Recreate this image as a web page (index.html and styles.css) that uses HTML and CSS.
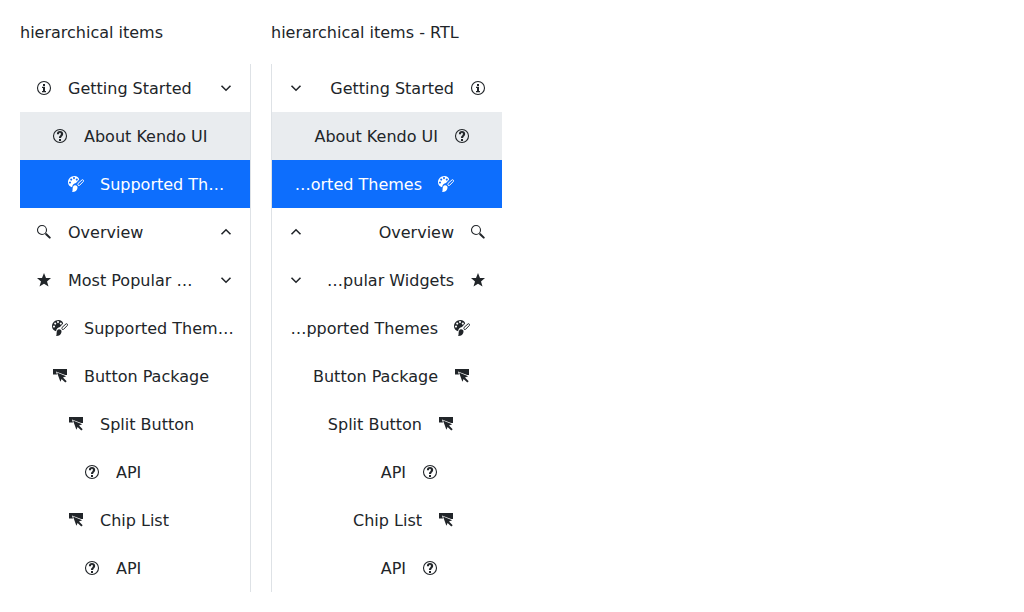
FILE: index.html
```
<!DOCTYPE html>
<html lang="en">
<head>
<meta charset="utf-8">
<title>Drawer hierarchical items</title>
<link rel="stylesheet" href="styles.css">
</head>
<body>
<svg class="sprite" aria-hidden="true">
  <symbol id="info" viewBox="0 0 16 16"><circle cx="8" cy="8" r="6.500" fill="none" stroke="currentColor" stroke-width="1.100"/><path d="M7 4h2v2H7zM6 6.800h3V11h1v1.200H6V11h1V8H6z"/></symbol>
  <symbol id="question" viewBox="0 0 16 16"><circle cx="8" cy="8" r="6.500" fill="none" stroke="currentColor" stroke-width="1.100"/><path d="M7 11h2v2H7zM4.900 6.300C4.900 4 6 3 8 3s3.200 1.100 3.200 2.900C11.200 8 9.100 8.300 9.100 10H6.900c0-2.500 2-2.700 2-4.100 0-.7-.3-1.100-.9-1.100s-1 .5-1 1.500z"/></symbol>
  <symbol id="search" viewBox="0 0 16 16"><circle cx="6" cy="6" r="4.500" fill="none" stroke="currentColor" stroke-width="1.100"/><path d="M9 10l1-1 1 .5 3.700 3.700c.5.5-.9 1.900-1.400 1.400L9.500 11z"/></symbol>
  <symbol id="star" viewBox="0 0 16 16"><path d="M8 1l2 5h5l-4 3.400 1.500 5.200L8 11.700l-4.500 2.900L5 9.400 1 6h5z"/></symbol>
  <symbol id="palette" viewBox="0 0 16 16"><path fill-rule="evenodd" d="M6.500 0c2.300 0 4.300 1.300 4.700 3.500L8 7.100C6 7.500 4.400 8.700 4.100 11.200 1.600 10.700 0 8.800 0 6.200 0 2.800 3 0 6.500 0zM6 1a1 1 0 1 0 .01 0zM8.800 2.500a1 1 0 1 0 .01 0zM3.200 2.500a1 1 0 1 0 .01 0zM2 5.500a1 1 0 1 0 .01 0z"/><path d="M9.900 8.500l.2-1.100L14 3.900c.9-.7 2.100.6 1.400 1.500l-3.900 4-1.100.1z" fill="none" stroke="currentColor" stroke-width="1"/><path d="M7 9.200c1.800 0 2.700 1.100 2.500 2.700-.3 2.300-2 4.100-5.500 4.100.9-.9.400-2.200.7-3.900.3-1.900 1-2.900 2.300-2.900z"/></symbol>
  <symbol id="button" viewBox="0 0 16 16"><path d="M1 1h14v6h-1.800L3.900 3.600 5 6.500H1z"/><path d="M5 4.500l9.200 3.700-3.200 1.300 3.700 3.700-1.400 1.400-3.700-3.700-1.200 2.900z"/></symbol>
  <symbol id="down" viewBox="0 0 16 16"><path d="M3.500 5.800L8 10.200l4.500-4.400" fill="none" stroke="currentColor" stroke-width="1.600"/></symbol>
  <symbol id="up" viewBox="0 0 16 16"><path d="M3.500 10.200L8 5.800l4.500 4.400" fill="none" stroke="currentColor" stroke-width="1.600"/></symbol>
</svg>
<main class="board">
  <section>
    <h1 class="title">hierarchical items</h1>
    <ul class="drawer">
      <li class="item"><svg class="icon"><use href="#info"/></svg><span class="text">Getting Started</span><svg class="icon"><use href="#down"/></svg></li>
      <li class="item level-1 hover"><svg class="icon"><use href="#question"/></svg><span class="text">About Kendo UI</span></li>
      <li class="item level-2 selected"><svg class="icon"><use href="#palette"/></svg><span class="text">Supported Themes</span></li>
      <li class="item"><svg class="icon"><use href="#search"/></svg><span class="text">Overview</span><svg class="icon"><use href="#up"/></svg></li>
      <li class="item"><svg class="icon"><use href="#star"/></svg><span class="text">Most Popular Widgets</span><svg class="icon"><use href="#down"/></svg></li>
      <li class="item level-1"><svg class="icon"><use href="#palette"/></svg><span class="text">Supported Themes</span></li>
      <li class="item level-1"><svg class="icon"><use href="#button"/></svg><span class="text">Button Package</span></li>
      <li class="item level-2"><svg class="icon"><use href="#button"/></svg><span class="text">Split Button</span></li>
      <li class="item level-3"><svg class="icon"><use href="#question"/></svg><span class="text">API</span></li>
      <li class="item level-2"><svg class="icon"><use href="#button"/></svg><span class="text">Chip List</span></li>
      <li class="item level-3"><svg class="icon"><use href="#question"/></svg><span class="text">API</span></li>
    </ul>
  </section>
  <section>
    <h1 class="title">hierarchical items - RTL</h1>
    <ul class="drawer" dir="rtl">
      <li class="item"><svg class="icon"><use href="#info"/></svg><span class="text">Getting Started</span><svg class="icon"><use href="#down"/></svg></li>
      <li class="item level-1 hover"><svg class="icon"><use href="#question"/></svg><span class="text">About Kendo UI</span></li>
      <li class="item level-2 selected"><svg class="icon"><use href="#palette"/></svg><span class="text">Supported Themes</span></li>
      <li class="item"><svg class="icon"><use href="#search"/></svg><span class="text">Overview</span><svg class="icon"><use href="#up"/></svg></li>
      <li class="item"><svg class="icon"><use href="#star"/></svg><span class="text">Most Popular Widgets</span><svg class="icon"><use href="#down"/></svg></li>
      <li class="item level-1"><svg class="icon"><use href="#palette"/></svg><span class="text">Supported Themes</span></li>
      <li class="item level-1"><svg class="icon"><use href="#button"/></svg><span class="text">Button Package</span></li>
      <li class="item level-2"><svg class="icon"><use href="#button"/></svg><span class="text">Split Button</span></li>
      <li class="item level-3"><svg class="icon"><use href="#question"/></svg><span class="text">API</span></li>
      <li class="item level-2"><svg class="icon"><use href="#button"/></svg><span class="text">Chip List</span></li>
      <li class="item level-3"><svg class="icon"><use href="#question"/></svg><span class="text">API</span></li>
    </ul>
  </section>
</main>
</body>
</html>
```

FILE: styles.css
```
* { box-sizing: border-box; }
body {
  margin: 0;
  background: #fff;
  color: #212529;
  font: 16px/24px "DejaVu Sans", sans-serif;
}
.sprite { display: none; }
.board {
  display: grid;
  grid-template-columns: 231px 231px;
  gap: 20px;
  padding: 20px;
}
.title {
  margin: 0 0 19px;
  padding-top: 1px;
  font-size: 16px;
  font-weight: 400;
  white-space: nowrap;
}
.drawer {
  margin: 0;
  padding: 0;
  list-style: none;
  border-inline-end: 1px solid #dee2e6;
}
.item {
  display: flex;
  align-items: center;
  gap: 16px;
  height: 48px;
  padding: 12px 16px;
}
.level-1 { padding-inline-start: 32px; }
.level-2 { padding-inline-start: 48px; }
.level-3 { padding-inline-start: 64px; }
.hover { background: #e9ecef; }
.selected { background: #0d6efd; color: #fff; }
.icon {
  flex: none;
  width: 16px;
  height: 16px;
  fill: currentColor;
}
.text {
  flex: 1;
  min-width: 0;
  padding-top: 2px;
  overflow: hidden;
  text-overflow: ellipsis;
  white-space: nowrap;
}
```
